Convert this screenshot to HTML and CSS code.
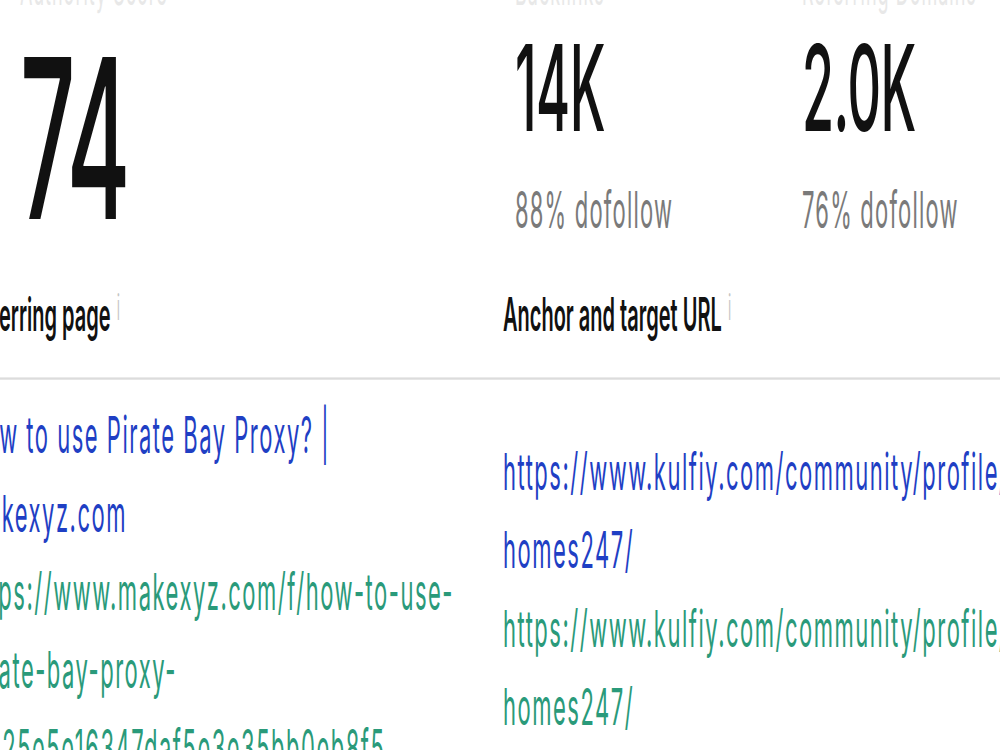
FILE: index.html
```html
<!DOCTYPE html>
<html>

<head>
    <title>Backlinks</title>
    <meta name="viewport" content="width=device-width, initial-scale=1.0">
    <link rel="stylesheet" href="styles.css">
</head>

<body>
    <main class="page">
        <section class="metrics">
            <div class="metric">
                <span class="label">Authority Score</span>
                <span class="value big">74</span>
            </div>
            <div class="metric">
                <span class="label">Backlinks</span>
                <span class="value">14K</span>
                <span class="note">88% dofollow</span>
            </div>
            <div class="metric">
                <span class="label">Referring Domains</span>
                <span class="value">2.0K</span>
                <span class="note">76% dofollow</span>
            </div>
        </section>

        <section class="links">
            <div class="head">
                <div class="col">Referring page<i class="tip">i</i></div>
                <div class="col">Anchor and target URL<i class="tip">i</i></div>
            </div>
            <div class="row">
                <div class="col">
                    <a class="title" href="#">How to use Pirate Bay Proxy? | makexyz.com</a>
                    <a class="url" href="#">https://www.makexyz.com/f/how-to-use-pirate-bay-proxy-f1625e5e16347daf5e3e35bb0eb8f5</a>
                </div>
                <div class="col anchor">
                    <a class="title" href="#">https://www.kulfiy.com/community/profile/<wbr>homes247/</a>
                    <a class="url" href="#">https://www.kulfiy.com/community/profile/<wbr>homes247/</a>
                </div>
            </div>
        </section>
    </main>
</body>

</html>
```

FILE: styles.css
```css
* { box-sizing: border-box; margin: 0; padding: 0; }
html, body { overflow: hidden; height: 100%; background: #fff; }
body { font-family: Inter, "Liberation Sans", sans-serif; color: #111; }

/* the whole sheet is drawn tall: everything below is in unstretched units */
.page { width: 1000px; transform: scaleY(2.3); transform-origin: 0 0; }

.metrics { display: grid; grid-template-columns: 495px 287px 1fr; padding-left: 20px; margin-top: -32px; }
.metric { display: flex; flex-direction: column; }
.label { font-size: 18px; line-height: 20px; letter-spacing: 1px; color: #e8e8e8; }
.value { font-size: 52px; line-height: 52px; margin-top: 7px; font-weight: 500; letter-spacing: -0.5px; }
.value.big { font-size: 97px; line-height: 97px; margin-top: 5px; letter-spacing: -3px; }
.note { font-size: 22px; line-height: 24px; margin-top: 14px; letter-spacing: 1.2px; color: #7a7a7a; }

.links { margin-top: 17px; }
.head, .row { display: grid; grid-template-columns: 536px 1fr; width: 1100px; margin-left: -33px; }
.head { font-size: 20px; font-weight: 600; line-height: 24px; padding-bottom: 14.5px; border-bottom: 1px solid #dcdcdc; }
.tip { font-style: normal; font-weight: 300; font-size: 16px; line-height: 16px; margin-left: 6px; color: #c4c4c4; vertical-align: top; }

.row .col { display: flex; flex-direction: column; padding: 7px 38px 0 0; font-size: 22px; line-height: 34px; letter-spacing: 1.5px; }
.row .anchor { padding-top: 23px; }
.row a { text-decoration: none; }
.title { color: #1f3fc4; }
.url { color: #2a9a7a; }
```
